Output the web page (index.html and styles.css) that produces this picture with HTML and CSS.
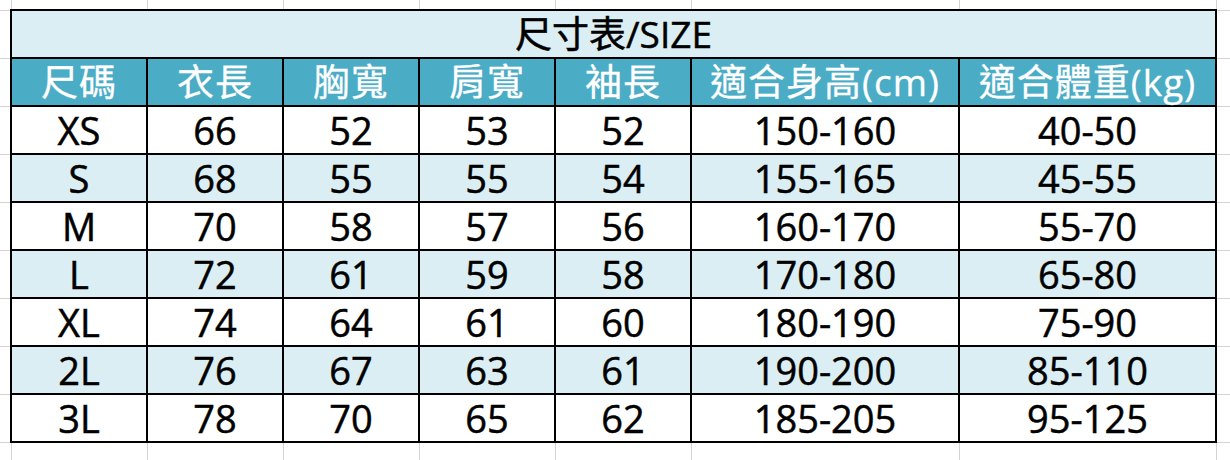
FILE: index.html
```html
<!DOCTYPE html>
<html lang="zh-Hant">
<head>
<meta charset="utf-8">
<title>尺寸表/SIZE</title>
<link rel="stylesheet" href="styles.css">
</head>
<body>
<div class="sheet" role="table">
  <div class="cell title" role="row">尺寸表/SIZE</div>

  <div class="cell head">尺碼</div>
  <div class="cell head">衣長</div>
  <div class="cell head">胸寬</div>
  <div class="cell head">肩寬</div>
  <div class="cell head">袖長</div>
  <div class="cell head">適合身高(cm)</div>
  <div class="cell head">適合體重(kg)</div>

  <div class="cell">XS</div><div class="cell">66</div><div class="cell">52</div><div class="cell">53</div><div class="cell">52</div><div class="cell">150-160</div><div class="cell">40-50</div>

  <div class="cell alt">S</div><div class="cell alt">68</div><div class="cell alt">55</div><div class="cell alt">55</div><div class="cell alt">54</div><div class="cell alt">155-165</div><div class="cell alt">45-55</div>

  <div class="cell">M</div><div class="cell">70</div><div class="cell">58</div><div class="cell">57</div><div class="cell">56</div><div class="cell">160-170</div><div class="cell">55-70</div>

  <div class="cell alt">L</div><div class="cell alt">72</div><div class="cell alt">61</div><div class="cell alt">59</div><div class="cell alt">58</div><div class="cell alt">170-180</div><div class="cell alt">65-80</div>

  <div class="cell">XL</div><div class="cell">74</div><div class="cell">64</div><div class="cell">61</div><div class="cell">60</div><div class="cell">180-190</div><div class="cell">75-90</div>

  <div class="cell alt">2L</div><div class="cell alt">76</div><div class="cell alt">67</div><div class="cell alt">63</div><div class="cell alt">61</div><div class="cell alt">190-200</div><div class="cell alt">85-110</div>

  <div class="cell">3L</div><div class="cell">78</div><div class="cell">70</div><div class="cell">65</div><div class="cell">62</div><div class="cell">185-205</div><div class="cell">95-125</div>
</div>
</body>
</html>
```

FILE: styles.css
```css
html, body {
  height: 100%;
}

body {
  margin: 0;
  background-color: #ffffff;
  background-image:
    linear-gradient(#d4d4d4, #d4d4d4),
    linear-gradient(#d4d4d4, #d4d4d4),
    linear-gradient(#d4d4d4, #d4d4d4),
    linear-gradient(#d4d4d4, #d4d4d4),
    linear-gradient(#d4d4d4, #d4d4d4),
    linear-gradient(#d4d4d4, #d4d4d4),
    linear-gradient(#d4d4d4, #d4d4d4),
    linear-gradient(#d4d4d4, #d4d4d4),
    linear-gradient(to bottom, #d4d4d4 1px, transparent 1px);
  background-size:
    1px 100%, 1px 100%, 1px 100%, 1px 100%,
    1px 100%, 1px 100%, 1px 100%, 1px 100%,
    100% 48px;
  background-position:
    11px 0, 147px 0, 283px 0, 419px 0,
    555px 0, 691px 0, 959px 0, 1216px 0,
    0 10px;
  background-repeat:
    no-repeat, no-repeat, no-repeat, no-repeat,
    no-repeat, no-repeat, no-repeat, no-repeat,
    repeat;
  font-family: "Open Sans", "Noto Sans CJK TC", sans-serif;
  color: #000000;
  overflow: hidden;
}

.sheet {
  display: grid;
  grid-template-columns: 136px 136px 136px 136px 136px 268px 257px;
  grid-auto-rows: 48px;
  width: max-content;
  margin: 9px 0 0 10px;
  border-top: 2px solid #000000;
  border-left: 2px solid #000000;
  background: #ffffff;
}

.cell {
  box-sizing: border-box;
  display: flex;
  align-items: center;
  justify-content: center;
  border-right: 2px solid #000000;
  border-bottom: 2px solid #000000;
  font-size: 38px;
  font-weight: 400;
  -webkit-text-stroke: 0.5px currentColor;
  line-height: 1;
  white-space: nowrap;
  padding-bottom: 1px;
}

.title {
  grid-column: 1 / -1;
  background: #daeef3;
  font-size: 37px;
}

.head {
  background: #4bacc6;
  color: #ffffff;
  font-size: 37px;
  letter-spacing: 1px;
  -webkit-text-stroke: 0.3px currentColor;
}

.alt {
  background: #daeef3;
}
```
